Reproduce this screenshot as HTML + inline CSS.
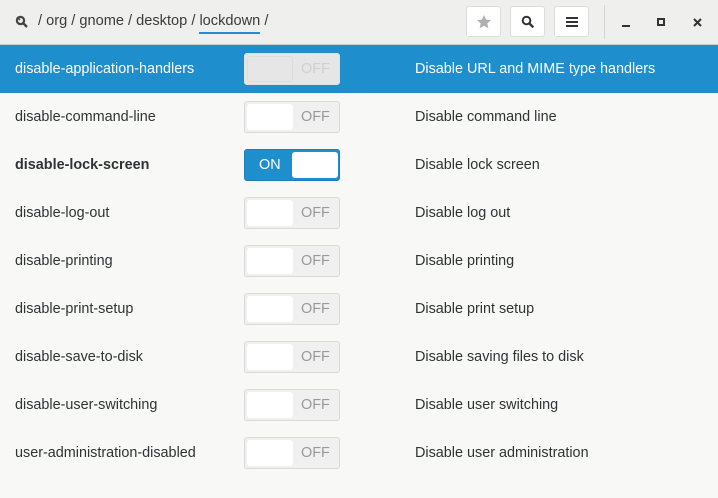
<!DOCTYPE html>
<html><head><style>
body{margin:0;width:718px;height:498px;background:#f8f8f7;font-family:"Liberation Sans",sans-serif;font-size:14.4px;color:#2e3436;overflow:hidden;position:relative}
.hdr{position:absolute;left:0;top:0;width:718px;height:44px;background:#efefee;border-bottom:1px solid #cdcdcd}
.path{position:absolute;left:38px;top:13px;font-size:14.6px;color:#3a3a3a}
.path u{text-decoration:none;border-bottom:2px solid #2a8ad4;padding-bottom:3px}
.btn{position:absolute;top:6px;width:35px;height:31px;background:#fff;border:1px solid #ddd;border-radius:3px;box-sizing:border-box}
.row{position:absolute;left:0;width:718px;height:48px}
.row .k{position:absolute;left:15px;top:16px}
.row .d{position:absolute;left:415px;top:16px}
.sw{position:absolute;left:244px;top:8px;width:96px;height:32px;box-sizing:border-box;border:1px solid #dadada;border-radius:3px;background:#f0f0f0}
.sw .s{position:absolute;left:2px;top:2px;width:46px;height:26px;background:#fff;border-radius:3px}
.sw .t{position:absolute;left:56px;top:7px;color:#999}
.sel{background:#1f8ecd;color:#fff}
.sel .sw{background:#e6e6e6;border-color:#e0e0e0}
.sel .sw .s{background:#e6e6e6;border:1px solid #ddd;box-sizing:border-box}
.sel .sw .t{color:#d0d0d0}
.on .sw{background:#1f8ecd;border-color:#1f7fba}
.on .sw .s{left:47px}
.on .sw .t{left:14px;color:#fff}
</style></head><body>
<div class="hdr">
<svg style="position:absolute;left:15px;top:15px" width="14" height="14" viewBox="0 0 14 14"><circle cx="5.5" cy="5.5" r="3.6" fill="none" stroke="#444" stroke-width="2.2"/><path d="M8 8l4 4" stroke="#444" stroke-width="2.4"/><path d="M2 2l3 3" stroke="#444" stroke-width="1.5"/></svg>
<div class="path">/ org / gnome / desktop / <u>lockdown</u> /</div>
<div class="btn" style="left:466px"><svg style="position:absolute;left:9px;top:7px" width="16" height="16" viewBox="0 0 16 16"><path d="M8 1l2.1 4.6 5 .5-3.8 3.3 1.1 4.9L8 11.8 3.6 14.3l1.1-4.9L.9 6.1l5-.5z" fill="#b0b0b0"/></svg></div>
<div class="btn" style="left:510px"><svg style="position:absolute;left:10px;top:8px" width="14" height="14" viewBox="0 0 14 14"><circle cx="5.5" cy="5.5" r="3.8" fill="none" stroke="#333" stroke-width="2"/><path d="M8.3 8.3l4 4" stroke="#333" stroke-width="2.4"/></svg></div>
<div class="btn" style="left:554px"><svg style="position:absolute;left:11px;top:9px" width="12" height="12" viewBox="0 0 12 12"><path d="M0 2h12M0 6h12M0 10h12" stroke="#333" stroke-width="2"/></svg></div>
<div style="position:absolute;left:604px;top:5px;width:1px;height:34px;background:#d5d5d5"></div>
<div style="position:absolute;left:622px;top:25px;width:8px;height:2px;background:#333"></div>
<div style="position:absolute;left:657px;top:18px;width:8px;height:8px;border:2px solid #333;box-sizing:border-box"></div>
<svg style="position:absolute;left:693px;top:18px" width="9" height="9" viewBox="0 0 9 9"><path d="M1 1l7 7M8 1l-7 7" stroke="#333" stroke-width="2"/></svg>
</div>

<div class="row sel" style="top:45px"><span class="k">disable-application-handlers</span><div class="sw"><div class="s"></div><span class="t">OFF</span></div><span class="d">Disable URL and MIME type handlers</span></div>
<div class="row" style="top:93px"><span class="k">disable-command-line</span><div class="sw"><div class="s"></div><span class="t">OFF</span></div><span class="d">Disable command line</span></div>
<div class="row on" style="top:141px"><span class="k"><b>disable-lock-screen</b></span><div class="sw"><div class="s"></div><span class="t">ON</span></div><span class="d">Disable lock screen</span></div>
<div class="row" style="top:189px"><span class="k">disable-log-out</span><div class="sw"><div class="s"></div><span class="t">OFF</span></div><span class="d">Disable log out</span></div>
<div class="row" style="top:237px"><span class="k">disable-printing</span><div class="sw"><div class="s"></div><span class="t">OFF</span></div><span class="d">Disable printing</span></div>
<div class="row" style="top:285px"><span class="k">disable-print-setup</span><div class="sw"><div class="s"></div><span class="t">OFF</span></div><span class="d">Disable print setup</span></div>
<div class="row" style="top:333px"><span class="k">disable-save-to-disk</span><div class="sw"><div class="s"></div><span class="t">OFF</span></div><span class="d">Disable saving files to disk</span></div>
<div class="row" style="top:381px"><span class="k">disable-user-switching</span><div class="sw"><div class="s"></div><span class="t">OFF</span></div><span class="d">Disable user switching</span></div>
<div class="row" style="top:429px"><span class="k">user-administration-disabled</span><div class="sw"><div class="s"></div><span class="t">OFF</span></div><span class="d">Disable user administration</span></div>
</body></html>
